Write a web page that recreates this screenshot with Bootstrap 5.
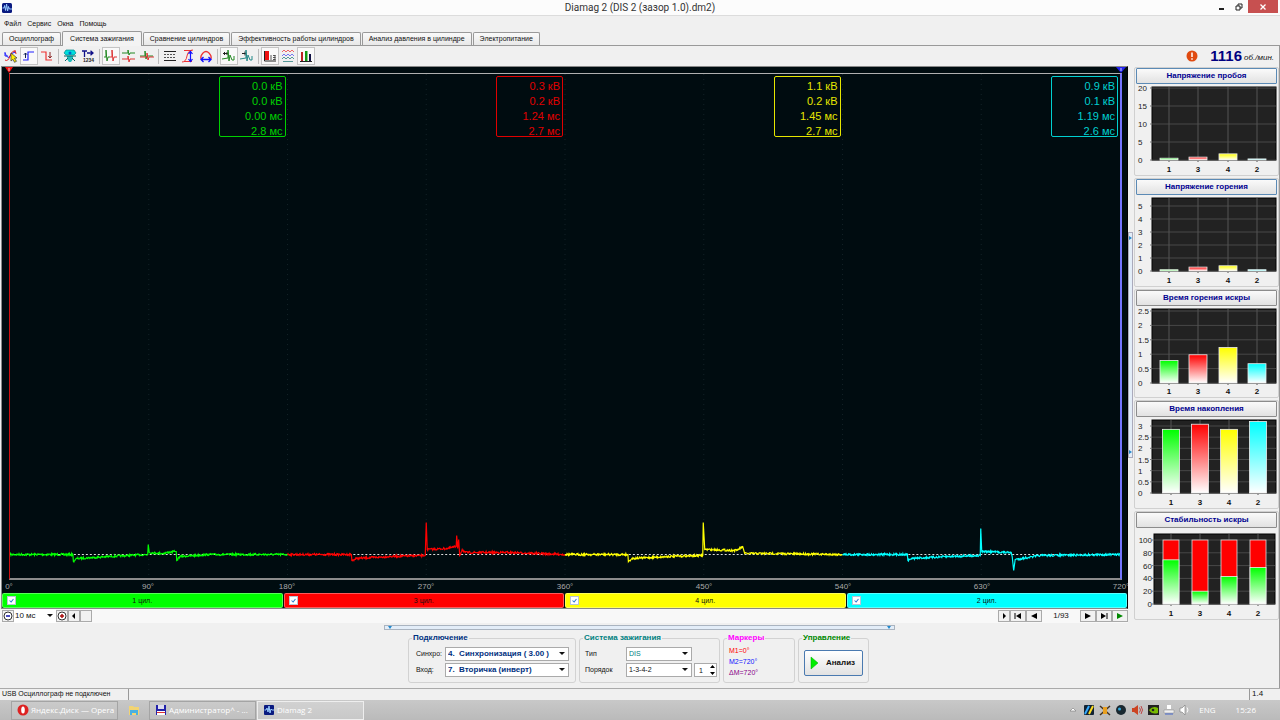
<!DOCTYPE html>
<html lang="ru">
<head>
<meta charset="utf-8">
<meta name="viewport" content="width=device-width, initial-scale=1">
<title>Diamag 2 (DIS 2 (зазор 1.0).dm2)</title>
<link href="https://cdn.jsdelivr.net/npm/bootstrap@5.3.0/dist/css/bootstrap.min.css" rel="stylesheet">
<style>
body{font-family:"Liberation Sans",Arial,sans-serif;font-size:7px;line-height:10px;color:#111;background:#f0f0f0}
button,input,select{font:inherit;color:inherit}
button{padding:0;border:0;background:none}
svg{display:block}
.title-bar{height:16px;background:#fcfcfc;border-bottom:1px solid #dcdcdc}
.title-bar h1{font:10px/16px Roboto,"Noto Sans",sans-serif;color:#333}
.title-side{width:66px;padding-right:2px}
.win-btn{width:17px;height:13px;display:flex;align-items:center;justify-content:center}
.win-close{width:30px;background:#c75050}
.menu-row{height:15px;padding:3px 0 0 4px;gap:6px}
.menu-row a{color:#111;text-decoration:none}
.tab-row{height:15px;padding-left:2px;border-bottom:1px solid #999}
.tab-row button{height:13px;padding:0 6px;border:1px solid #999;border-bottom:0;border-radius:2px 2px 0 0;background:linear-gradient(#fafafa,#e8e8e8);margin-right:1px;white-space:nowrap}
.tab-row button.active{height:15px;background:#f3f3f3;margin-bottom:-1px;padding:0 7px}
.tool-row{height:20px;padding-left:2px}
.tool-row .tool{width:18px;height:18px;display:flex;align-items:center;justify-content:center}
.tool.pressed{background:#f9f9f9;border:1px solid #c4c4c4}
.tool-sep{width:1px;height:15px;margin:0 2px;background:#bbb}
.rpm{color:#000080;font:bold 15px/18px "Liberation Sans",Arial,sans-serif}
.rpm-unit{font-size:8px;padding:3px 5px 0 2px}
.scope{background:#000c10;border:1px solid #888;border-right-color:#000;min-height:300px;margin-left:1px}
.marker-strip{height:6px;padding:0 1px 0 3px}
.plot-area{position:relative;margin:0 5px 0 7px;border-top:1px solid #b0b0b0;border-bottom:2px solid #8c8c8c;border-left:1px solid #d01010;border-right:2px solid #7474ff}
.trace{position:absolute;inset:0;width:100%;height:100%}
.readouts{padding-top:2px}
.readout-cell{padding-right:2px}
.readout{width:67px;border:1px solid;border-radius:2px;padding:2px 2px 0;font-size:11px;line-height:14px;height:61px;text-align:right;background:#000c10}
.readout div{height:15px}
.axis-x{height:13px;padding:2px 6px 0 7px;color:#aaa;font-size:8px}
.axis-x span{width:0;display:flex;justify-content:center;white-space:nowrap}
.chan{height:15px;border-radius:2px;border:1px solid rgba(255,255,255,.35);color:#111}
.chan input,.chan i{width:9px;height:9px;margin:0 4px}
.chan input{appearance:none;background:#fff url("data:image/svg+xml,%3Csvg xmlns='http://www.w3.org/2000/svg' viewBox='0 0 9 9'%3E%3Cpath d='M2 4.5 4 6.5 7 2.5' fill='none' stroke='%232878d0' stroke-width='1.3'/%3E%3C/svg%3E");border:1px solid #b8c4d4}
.nav-strip{height:14px;background:#f8f8f8;font-size:8px;padding-left:2px}
.mini{width:12px;height:12px;border:1px solid #aaa;background:#f1f1f1;display:flex;align-items:center;justify-content:center}
.mini.wide{width:16px}
.flat-select{appearance:none;border:1px solid #aaa;border-radius:0;padding:0 12px 0 2px;background:#fff url("data:image/svg+xml,%3Csvg xmlns='http://www.w3.org/2000/svg' viewBox='0 0 12 6'%3E%3Cpath d='M3 1h6L6 4z' fill='%23111'/%3E%3C/svg%3E") no-repeat right center/12px 6px}
.sel-time{width:42px;height:100%;border:0;padding-left:1px}
.page-no{width:38px}
.v-split{width:6px;background:#f0f0f0}
.v-split span{width:5px;height:226px;border:1px solid #aab;background:#e3edf8;display:flex;flex-direction:column;justify-content:space-between}
.side{width:145px;gap:2px;padding-top:1px}
.chart-card{border:1px solid #d0d0d0;border-radius:2px;height:109px;padding:0 1px}
.chart-card button{width:100%;height:16px;border:1px solid #8c8c8c;border-radius:1px;background:linear-gradient(#fafafa,#e2e2e2);color:#000090;font-weight:bold;font-size:8px}
.chart-card.hot button{border-color:#5b8ab5}
.chart-card svg{width:100%;height:auto}
.bottom-area{padding:2px 0 5px}
.h-split{width:40%;height:5px;border:1px solid #aab4c0;background:#e3edf8}
.group-row{gap:3px;padding:4px 2px 0 0}
.group-box{border:1px solid #d2d2d2;border-radius:3px;height:49px;padding:0 5px;margin:0;min-width:0}
.group-box legend{float:none;width:auto;font-size:8px;line-height:8px;font-weight:bold;margin:0 0 0 -2px;padding:0 1px}
.g-blue{color:#003080}.g-teal{color:#008080}.g-mag{color:#f0f}.g-green{color:#080}
.group-lines{display:grid;gap:2px;padding-top:5px}
.sel-big{width:124px;height:14px;font-weight:bold;color:#003080;font-size:8px}
.sel-mid{width:66px;height:14px}
.lab-a{width:31px;padding-left:2px}
.lab-b{width:41px}
.marks{line-height:11px;padding-top:3px}
.spin-num{width:14px;height:12px;border:0;padding:0 0 0 4px;appearance:textfield;background:#fff}
.spin-num::-webkit-inner-spin-button{display:none}
.spin-box{width:23px;height:14px;border:1px solid #aaa;background:#fff;margin-left:2px}
.run-btn{width:59px;height:26px;border:1px solid #4a7ab0;border-radius:2px;background:linear-gradient(#fff,#e2e2e2);font-weight:bold;font-size:8px}
.status{height:12px;border-top:1px solid #aaa;padding-left:2px}
.status-a{width:127px;border-right:1px solid #999}
.status-b{width:31px;border-left:1px solid #999;padding-left:2px;font-size:8px}
.task-bar{height:20px;background:linear-gradient(#c8c8c8,#bababa);color:#fff;font:8px/18px "Open Sans","Noto Sans",sans-serif;padding-left:11px}
.task{width:107px;height:19px;border:1px solid #a4a4a4;background:rgba(255,255,255,.08);padding:0 5px;gap:2px;text-align:left;white-space:nowrap}
.task svg{flex-shrink:0}
.task.active{border-color:#eee;background:rgba(255,255,255,.2);margin-left:1px}
.task-pin{width:31px;display:flex;justify-content:center}
.window{border-right:1px solid #999}
</style>
</head>
<body class="d-flex flex-column min-vh-100">

<header class="title-bar d-flex justify-content-between">
  <div class="title-side">
    <svg width="14" height="14" viewBox="0 0 14 14"><rect x="2" y="3" width="10" height="10" rx="1.5" fill="#0a1a80"/><path d="M2.5 8h1.5l.6-2.500 1 5 1-6.500 1 7 .9-4.500.8 2.500H12" fill="none" stroke="#9cf" stroke-width="1"/></svg>
  </div>
  <h1 class="m-0">Diamag 2 (DIS 2 (зазор 1.0).dm2)</h1>
  <div class="title-side d-flex">
    <button class="win-btn" aria-label="Свернуть"><svg width="8" height="8"><path d="M1 6h5" stroke="#222" stroke-width="2"/></svg></button>
    <button class="win-btn" aria-label="Восстановить"><svg width="8" height="8"><path d="M1 3h4v4H1zM3 3V1h4v4H5" fill="none" stroke="#222"/></svg></button>
    <button class="win-btn win-close" aria-label="Закрыть"><svg width="8" height="8"><path d="M1.500 1.500l5 5M6.500 1.500l-5 5" stroke="#fff" stroke-width="1.300"/></svg></button>
  </div>
</header>

<nav class="menu-row d-flex"><a href="#">Файл</a><a href="#">Сервис</a><a href="#">Окна</a><a href="#">Помощь</a></nav>

<nav class="tab-row d-flex align-items-end">
  <button>Осциллограф</button><button class="active">Система зажигания</button><button>Сравнение цилиндров</button><button>Эффективность работы цилиндров</button><button>Анализ давления в цилиндре</button><button>Электропитание</button>
</nav>

<div class="tool-row window d-flex align-items-center">
  <button class="tool" aria-label="Осциллограмма"><svg width="14" height="14"><path d="M1 4q3 7 5 3t6-4M1 3v4h3" fill="none" stroke="#22f"/><path d="M1 11q3 2 5-4t6-5M10 2q2 0 2 3" fill="none" stroke="#d22"/><path d="M7 4l6 5-2.500.3 2 3-2 1-1.500-3L7 12z" fill="#fe0" stroke="#333" stroke-width=".7"/></svg></button>
  <button class="tool pressed" aria-label="Фронт"><svg width="14" height="14"><path d="M1 11h5V3h6" fill="none" stroke="#22f" stroke-width="1.200"/><path d="M3.500 9V4M1.800 5.800L3.500 4l1.700 1.800" fill="none" stroke="#125"/></svg></button>
  <button class="tool" aria-label="Спад"><svg width="14" height="14"><path d="M1 3h5v8h6" fill="none" stroke="#e33" stroke-width="1.200"/><path d="M10 3v6M8.300 7L10 9l1.700-2" fill="none" stroke="#822"/></svg></button>
  <span class="tool-sep"></span>
  <button class="tool" aria-label="Датчик"><svg width="14" height="14"><path d="M3 1h8l2 3-2 2H3L1 4z" fill="#0dd" stroke="#088" stroke-width=".7"/><path d="M4 7h6v3l-2 3H6l-2-3z" fill="#2bb"/><path d="M1 7h12M2 12l3-3M12 12L9 9" stroke="#066" stroke-width="1"/><circle cx="7" cy="4" r="1.500" fill="#06c"/></svg></button>
  <button class="tool" aria-label="Время"><svg width="14" height="14"><path d="M1 2h5M3.500 2v6M6 4h6M9.500 1.800L12 4 9.500 6.200" fill="none" stroke="#118" stroke-width="1.300"/><text x="2" y="13" font-size="5" font-weight="bold" fill="#222">1234</text></svg></button>
  <span class="tool-sep"></span>
  <button class="tool pressed" aria-label="Парад"><svg width="14" height="14"><path d="M0 8h2V1l1 11 1-4h2" fill="none" stroke="#282"/><path d="M6 8h2V1l1 11 1-4h3" fill="none" stroke="#d33"/></svg></button>
  <button class="tool" aria-label="Растр"><svg width="14" height="14"><path d="M0 4h6V1l1 5 1-2h5" fill="none" stroke="#282"/><path d="M0 10h6V7l1 6 1-3h5" fill="none" stroke="#d33"/></svg></button>
  <button class="tool" aria-label="Наложение"><svg width="14" height="14"><path d="M0 7h5V2l1 8 1-3h6" fill="none" stroke="#282"/><path d="M0 8h7V4l1 7 1-3h5" fill="none" stroke="#d33"/></svg></button>
  <span class="tool-sep"></span>
  <button class="tool" aria-label="Линии"><svg width="14" height="14"><path d="M1 2.500h12M1 11.500h12" stroke="#222"/><path d="M1 5.500h12M1 8.500h12" stroke="#555" stroke-dasharray="2 1"/></svg></button>
  <button class="tool" aria-label="Масштаб по вертикали"><svg width="14" height="14"><path d="M1 13Q5 13 6 7t6-6M3 1.500h8M3 12.500h8" fill="none" stroke="#e33"/><path d="M9.500 3v9M7.500 5l2-2.500 2 2.500M7.500 10l2 2.500 2-2.500" fill="none" stroke="#11f" stroke-width="1.200"/></svg></button>
  <button class="tool" aria-label="Масштаб по горизонтали"><svg width="14" height="14"><path d="M2 10Q1 7 4 4t6 0 2 6" fill="none" stroke="#e33" stroke-width="1.200"/><path d="M2 10.500h10M4.500 8L2 10.500 4.500 13M9.500 8l2.500 2.500L9.500 13" fill="none" stroke="#11f" stroke-width="1.300"/></svg></button>
  <span class="tool-sep"></span>
  <button class="tool pressed" aria-label="Синхронизация"><svg width="14" height="14"><path d="M1 4.500h5M2.500 3v3M5 3v3" stroke="#222" stroke-width="1"/><path d="M0 10l6-1V1l1 11 1-6 2 5h2V7" fill="none" stroke="#282"/></svg></button>
  <button class="tool" aria-label="Сдвиг"><svg width="14" height="14"><path d="M2 4.500h4M5 2.500v4" stroke="#222" stroke-width="1"/><path d="M0 10l6-1V1l1 11 1-6 2 5h2V7" fill="none" stroke="#288"/></svg></button>
  <span class="tool-sep"></span>
  <button class="tool pressed" aria-label="Значения"><svg width="14" height="14"><path d="M1.500 2v10H13" fill="none" stroke="#222"/><path d="M2 2h4v9H2z" fill="#e11"/><path d="M8 6v5M10 6.500h2.500M10 8.500h2.500M10 10.500h2.500M12 6v5" stroke="#444" stroke-width=".9"/></svg></button>
  <button class="tool" aria-label="Волны"><svg width="14" height="14"><path d="M1 3l2-2 2 2 2-2 2 2 2-2 2 2" fill="none" stroke="#e66"/><path d="M1 7l2-2 2 2 2-2 2 2 2-2 2 2" fill="none" stroke="#77e"/><path d="M1 10l2-2 2 2 2-2 2 2 2-2 2 2M2 12.500h10" fill="none" stroke="#599"/></svg></button>
  <button class="tool pressed" aria-label="Диаграммы"><svg width="14" height="14"><path d="M1 12.500h12" stroke="#222"/><path d="M2 3h2v9H2z" fill="#b22"/><path d="M6 2h2.500v10H6z" fill="#191"/><path d="M10 5h2v7h-2z" fill="#114"/></svg></button>
  <div class="ms-auto d-flex align-items-center">
    <svg width="12" height="12" class="me-2"><circle cx="6" cy="6" r="5.500" fill="#e04a10"/><path d="M6 2.500v4.500M6 8.300v1.500" stroke="#fff" stroke-width="1.500"/></svg>
    <span class="rpm ms-1">1116</span><i class="rpm-unit">об./мин.</i>
  </div>
</div>

<main class="d-flex flex-grow-1 window">
  <section class="d-flex flex-column flex-grow-1">
    <div class="scope d-flex flex-column flex-grow-1">
      <div class="marker-strip d-flex justify-content-between">
        <svg width="8" height="6"><path d="M0 0h8L4 6z" fill="#e11"/><path d="M4 1v3" stroke="#fff" stroke-width=".8"/></svg>
        <svg width="10" height="6"><path d="M0 0h10L5 6z" fill="#22e"/><path d="M5 1v3" stroke="#fff" stroke-width=".8"/></svg>
      </div>
      <div class="plot-area flex-grow-1">
        <svg class="trace" id="trace" viewBox="0 0 1112 504" preserveAspectRatio="none"></svg>
        <div class="readouts d-flex position-relative" id="readouts"></div>
      </div>
      <div class="axis-x d-flex justify-content-between" id="axis"></div>
      <div class="d-flex" style="gap:1px" id="channels"></div>
    </div>
    <div class="nav-strip d-flex align-items-center">
      <button class="mini" aria-label="Уменьшить"><svg width="10" height="10"><circle cx="5" cy="5" r="4" fill="#fff" stroke="#333"/><path d="M3 5h4" stroke="#11a" stroke-width="1.500"/></svg></button>
      <select class="flat-select sel-time" aria-label="Развёртка"><option>10 мс</option></select>
      <button class="mini" aria-label="Увеличить"><svg width="10" height="10"><circle cx="5" cy="5" r="4" fill="#fff" stroke="#333"/><path d="M3 5h4M5 3v4" stroke="#a11" stroke-width="1.500"/></svg></button>
      <button class="mini" aria-label="Влево"><svg width="6" height="6"><path d="M4 0v6L1 3z"/></svg></button>
      <button class="mini" aria-label="Ползунок"></button>
      <button class="mini ms-auto" aria-label="Вправо"><svg width="6" height="6"><path d="M2 0v6l3-3z"/></svg></button>
      <button class="mini wide" aria-label="В начало"><svg width="8" height="6"><path d="M1 0v6" stroke="#000"/><path d="M7 0v6L2 3z"/></svg></button>
      <button class="mini wide" aria-label="Назад"><svg width="6" height="6"><path d="M6 0v6L0 3z"/></svg></button>
      <span class="text-center page-no">1/93</span>
      <button class="mini wide" aria-label="Вперёд"><svg width="6" height="6"><path d="M0 0v6l6-3z"/></svg></button>
      <button class="mini wide" aria-label="В конец"><svg width="8" height="6"><path d="M7 0v6" stroke="#000"/><path d="M1 0v6l5-3z"/></svg></button>
      <button class="mini wide" aria-label="Пуск"><svg width="6" height="6"><path d="M0 0v6l6-3z" fill="#080"/></svg></button>
    </div>
  </section>
  <div class="v-split d-flex align-items-center"><span><svg width="3" height="10"><path d="M0 3v4l3-2z" fill="#28c"/></svg><svg width="3" height="10"><path d="M0 3v4l3-2z" fill="#28c"/></svg></span></div>
  <aside class="side d-flex flex-column" id="side"></aside>
</main>

<section class="window bottom-area">
  <div class="h-split d-flex justify-content-between mx-auto"><svg width="10" height="3"><path d="M3 0h4L5 3z" fill="#28c"/></svg><svg width="10" height="3"><path d="M3 0h4L5 3z" fill="#28c"/></svg></div>
  <div class="group-row d-flex justify-content-center">
    <fieldset class="group-box" style="width:168px"><legend class="g-blue">Подключение</legend>
      <div class="group-lines">
        <div class="d-flex align-items-center"><label class="lab-a" for="sync">Синхро:</label><select id="sync" class="flat-select sel-big"><option>4.&nbsp; Синхронизация ( 3.00 )</option></select></div>
        <div class="d-flex align-items-center"><label class="lab-a" for="inp">Вход:</label><select id="inp" class="flat-select sel-big"><option>7.&nbsp; Вторичка (инверт)</option></select></div>
      </div>
    </fieldset>
    <fieldset class="group-box" style="width:141px"><legend class="g-teal">Система зажигания</legend>
      <div class="group-lines">
        <div class="d-flex align-items-center"><label class="lab-b" for="kind">Тип</label><select id="kind" class="flat-select sel-mid g-teal"><option>DIS</option></select></div>
        <div class="d-flex align-items-center"><label class="lab-b" for="order">Порядок</label><select id="order" class="flat-select sel-mid"><option>1-3-4-2</option></select>
          <div class="spin-box d-flex flex-shrink-0"><input class="spin-num" type="number" value="1" aria-label="Номер"><svg width="7" height="12"><path d="M1 4l2.500-3L6 4zM1 8l2.500 3L6 8z"/></svg></div></div>
      </div>
    </fieldset>
    <fieldset class="group-box" style="width:72px"><legend class="g-mag">Маркеры</legend>
      <div class="marks"><div style="color:#f00">M1=0°</div><div style="color:#11f">M2=720°</div><div style="color:#808">ΔM=720°</div></div>
    </fieldset>
    <fieldset class="group-box" style="width:71px"><legend class="g-green">Управление</legend>
      <button class="run-btn d-flex align-items-center mt-2"><svg width="21" height="14"><path d="M6 1v12l7-6z" fill="#0e0" stroke="#0a0" stroke-width=".5"/></svg>Анализ</button>
    </fieldset>
  </div>
</section>

<div class="status d-flex"><span class="status-a">USB Осциллограф не подключен</span><span class="status-b ms-auto">1.4</span></div>

<footer class="task-bar d-flex align-items-center">
  <button class="task d-flex align-items-center"><svg width="12" height="12"><circle cx="6" cy="6" r="5.500" fill="#d22"/><ellipse cx="6" cy="6" rx="1.800" ry="3.500" fill="#fff"/></svg>Яндекс.Диск — Opera</button>
  <button class="task-pin" aria-label="Проводник"><svg width="12" height="12"><path d="M1 2h4l1 1h5v8H1z" fill="#f2d472"/><path d="M2 6h8v5H8V9H4v2H2z" fill="#4ab0e0"/></svg></button>
  <button class="task d-flex align-items-center"><svg width="12" height="12"><path d="M1 1h10v10H1z" fill="#22a"/><path d="M3 1h6v4H3z" fill="#dde"/><path d="M2 7h8v4H2z" fill="#fff"/><path d="M2 8.500h8" stroke="#d33"/></svg>Администратор^ - ...</button>
  <button class="task active d-flex align-items-center"><svg width="12" height="12"><rect x="1" y="1" width="10" height="10" rx="1" fill="#0a1a80"/><path d="M1.500 6H3l1-2 1 4 1-6 1 7 1-4 1 1h2" fill="none" stroke="#9cf"/></svg>Diamag 2</button>
  <div class="ms-auto d-flex align-items-center gap-1">
    <svg width="12" height="12"><path d="M3 7l3-3 3 3z" fill="#fff" stroke="#777" stroke-width=".6"/></svg>
    <svg width="12" height="12"><rect x="1" y="1" width="10" height="10" rx="1" fill="#123"/><path d="M2 10L6 2" stroke="#3af" stroke-width="2"/><path d="M6 10l4-8" stroke="#fd2" stroke-width="2"/></svg>
    <svg width="12" height="12"><path d="M1 2l10 9M11 2L1 11" stroke="#432" stroke-width="1.500"/><path d="M4 3h4v7H4z" fill="#e9a020"/></svg>
    <svg width="12" height="12"><circle cx="6" cy="6" r="5" fill="#1a2830"/><circle cx="4.500" cy="5" r="1.500" fill="#3ad"/></svg>
    <svg width="12" height="12"><path d="M1 4h2l4-3v10L3 8H1z" fill="#c42"/><path d="M8.500 3.500q2 2.500 0 5M10 2q3 4 0 8" fill="none" stroke="#b44"/></svg>
    <svg width="12" height="12"><path d="M1 1h11v10H1z" fill="#222"/><path d="M2 6q4-5 9-2v5q-6 2-9-3z" fill="#7b0"/><circle cx="6" cy="6" r="1.300" fill="#222"/></svg>
    <svg width="12" height="12"><path d="M4 1h4v4H4z" fill="#fff"/><path d="M1 6h10v3H1z" fill="#eee" stroke="#888" stroke-width=".5"/><path d="M2 10h8" stroke="#46c"/></svg>
    <svg width="12" height="12"><path d="M1 4h2l3-3v10L3 8H1z" fill="#fff" stroke="#777" stroke-width=".6"/><path d="M8 3.500q2 2.500 0 5" fill="none" stroke="#fff"/></svg>
    <span class="ms-1">ENG</span><span class="ms-3 pe-4">15:26</span>
  </div>
</footer>

<script>
const cylinders = [
  {n:1, c:'#0f0', r:'#00d000', v:['0.0 кВ','0.0 кВ','0.00 мс','2.8 мс'],
   p:[[0,0],[63,0],[63.5,7],[67,4],[100,2],[138,0],[138.5,-10],[139.5,-2],[152,-1],[165,-3],[166.5,-3],[167,6],[170,2],[200,0],[278,0]]},
  {n:3, c:'#f00', r:'#e00000', v:['0.3 кВ','0.2 кВ','1.24 мс','2.7 мс'],
   p:[[278,0],[342,0],[342.5,6],[347,4],[380,2],[416,1],[417,-32],[418,-5],[438,-6],[447,-8],[447.5,-19],[448.5,-6],[449.5,-15],[450.5,1],[453,-5],[456,-2],[500,-2],[556,0]]},
  {n:4, c:'#ff0', r:'#e6e600', v:['1.1 кВ','0.2 кВ','1.45 мс','2.7 мс'],
   p:[[556,0],[619,0],[619.5,7],[623,4],[660,2],[694,1],[694.5,-32],[696,-5],[728,-4],[734,-8],[736,-1],[760,-1],[834,0]]},
  {n:2, c:'#0ff', r:'#00d0d0', v:['0.9 кВ','0.1 кВ','1.19 мс','2.6 мс'],
   p:[[834,0],[899,0],[899.5,6],[903,4],[940,2],[972,1],[972.5,-26],[973.5,-3],[1003,-2],[1004,2],[1005.5,16],[1007,5],[1020,3],[1032,1],[1112,0]]}
];

/* repeatable noise for the signal */
let seed = 7;
const noise = () => (seed = seed * 16807 % 2147483647) / 2147483647 * 2 - 1;
const zero = 480.5;
let svg = '';
for (let i = 1; i < 8; i++) svg += `<path d="M${i*139} 0V504" stroke="#122126" stroke-dasharray="1 4"/>`;
svg += `<path d="M0 ${zero}H1112" stroke="#ddd" stroke-dasharray="2 2"/>`;
cylinders.forEach(cy => {
  const pts = [];
  cy.p.forEach((a, i) => {
    const b = cy.p[i + 1];
    pts.push(a);
    if (!b) return;
    for (let x = a[0] + .5; x < b[0]; x += .5)
      if (b[0] - a[0] > 2) pts.push([x, a[1] + (b[1]-a[1]) * (x-a[0]) / (b[0]-a[0]) + noise()]);
  });
  svg += `<polyline fill="none" stroke="${cy.c}" stroke-width="1.2" points="${pts.map(q => q[0] + ',' + (zero + q[1]).toFixed(1)).join(' ')}"/>`;
});
trace.innerHTML = svg;
readouts.innerHTML = cylinders.map(cy => `<div class="readout-cell w-25 d-flex justify-content-end"><div class="readout" style="color:${cy.r}">${cy.v.map(t => `<div>${t}</div>`).join('')}</div></div>`).join('');
axis.innerHTML = [0,90,180,270,360,450,540,630,720].map(a => `<span>${a}°</span>`).join('');
channels.innerHTML = cylinders.map(cy => `<label class="chan d-flex align-items-center flex-fill" style="background:${cy.c}"><input type="checkbox" checked><span class="flex-grow-1 text-center">${cy.n} цил.</span><i></i></label>`).join('');

/* side charts: top and y[1] are the rows of the highest tick and of zero */
const cx = [33, 62, 92, 121];
const cx2 = [35, 64, 93, 122];
const charts = [
  {t:'Напряжение пробоя', hot:1, y:[3,76], ticks:[20,15,10,5,0], top:4, x:cx, b:[.5,.8,1.700,.3], w:18},
  {t:'Напряжение горения', hot:1, y:[3,76], ticks:[5,4,3,2,1,0], top:11, x:cx, b:[.1,.3,.4,.1], w:18},
  {t:'Время горения искры', y:[3,77], ticks:[2.5,2,1.5,1,.5,0], top:5, x:cx, b:[.78,.98,1.23,.67], w:18},
  {t:'Время накопления', y:[3,76], ticks:[3,2.5,2,1.5,1,.5,0], top:9, x:cx2, b:[2.85,3.08,2.85,3.2], w:17},
  {t:'Стабильность искры', y:[6,76], ticks:[100,80,60,40,20,0], top:12, x:cx2, b:[69,20,43,57], w:16, full:1}
];
const names = [1,3,4,2], colors = ['#0f0','#f00','#ff0','#0ff'];
side.innerHTML = charts.map((ch, k) => {
  const base = ch.y[1], left = ch.full ? 18 : 16, width = ch.full ? 121 : 124;
  const row = v => base - v / ch.ticks[0] * (base - ch.top);
  let s = `<defs>${colors.map((c, i) => `<linearGradient id="g${k}${i}" x2="0" y2="1"><stop stop-color="${ch.full ? '#0f0' : c}"/><stop offset="1" stop-color="#fff"/></linearGradient>`).join('')}</defs>`;
  s += `<rect x="${left}" y="${ch.y[0]}" width="${width}" height="${base - ch.y[0]}" fill="#222" stroke="#000"/>`;
  ch.ticks.forEach(v => { s += `<path d="M${left} ${row(v)}h${width}" stroke="#484848"/><path d="M${left-2} ${row(v)}h2" stroke="#777"/><text x="${ch.full ? 16 : v % 1 ? 13 : 2}" y="${row(v)+3}" ${ch.full || v % 1 ? 'text-anchor="end"' : ''} fill="#222">${v}</text>`; });
  ch.x.forEach((x, i) => {
    s += `<path d="M${x} ${ch.y[0]}V${base+2}" stroke="#555"/>`;
    if (ch.full) s += `<rect x="${x-ch.w/2}" y="${ch.top}" width="${ch.w}" height="${base-ch.top}" fill="red" stroke="#ddd" stroke-width=".8"/>`;
    s += `<rect x="${x-ch.w/2}" y="${row(ch.b[i])}" width="${ch.w}" height="${base-row(ch.b[i])}" fill="url(#g${k}${i})" stroke="#eee" stroke-width=".8"/>`;
    s += `<text x="${x}" y="88" text-anchor="middle" font-weight="bold" fill="#111">${names[i]}</text>`;
  });
  return `<div class="chart-card ${ch.hot ? 'hot' : ''}"><button>${ch.t}</button><svg viewBox="0 0 141 91" font-size="8">${s}</svg></div>`;
}).join('');
</script>
<script src="https://cdn.jsdelivr.net/npm/bootstrap@5.3.0/dist/js/bootstrap.bundle.min.js"></script>
</body>
</html>
